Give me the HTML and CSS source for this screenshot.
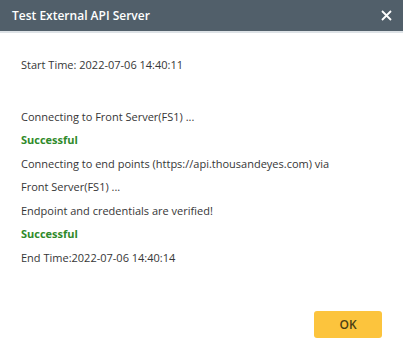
FILE: index.html
```html
<!DOCTYPE html>
<html lang="en">
<head>
  <meta charset="UTF-8" />
  <title>Test External API Server</title>
  <link rel="stylesheet" href="styles.css">
</head>
<body>
  <div class="dialog">
    <div class="dialog-header">
      <span class="dialog-title">Test External API Server</span>
      <span class="close-btn">
        <svg width="11" height="11" viewBox="0 0 11 11"><path d="M1 1L10 10M10 1L1 10" stroke="#fff" stroke-width="1.8"/></svg>
      </span>
    </div>
    <div class="dialog-body">
      <p class="start">Start Time: 2022-07-06 14:40:11</p>
      <p>Connecting to Front Server(FS1) ...</p>
      <p class="ok-text">Successful</p>
      <p>Connecting to end points (https://api.thousandeyes.com) via</p>
      <p>Front Server(FS1) ...</p>
      <p>Endpoint and credentials are verified!</p>
      <p class="ok-text">Successful</p>
      <p>End Time:2022-07-06 14:40:14</p>
    </div>
    <div class="dialog-footer">
      <button class="ok-btn">OK</button>
    </div>
  </div>
</body>
</html>
```

FILE: styles.css
```css
body { margin: 0; background: #fff; font-family: "Open Sans", Arial, sans-serif; }
.dialog { width: 403px; height: 361px; display: flex; flex-direction: column; background: #fff; }
.dialog-header { height: 31px; background: #515f6a; border-bottom: 2px solid #dde2e6; display: flex; align-items: center; justify-content: space-between; padding: 0 11px 0 12px; }
.dialog-title { color: #fff; font-size: 12px; font-weight: 600; }
.close-btn { display: flex; }
.dialog-body { padding: 20px 21px 0; flex: 1; }
.dialog-body p { margin: 0; font-size: 11px; line-height: 23.5px; color: #363636; }
.dialog-body p.start { margin-bottom: 28px; }
.dialog-body p.ok-text { color: #2f8a2a; font-weight: bold; }
.dialog-footer { display: flex; justify-content: flex-end; padding: 0 21px 23px; }
.ok-btn { width: 68px; height: 27px; background: #fcc43d; border: none; border-radius: 3px; color: #4d3f14; font-family: "Open Sans", Arial, sans-serif; font-size: 12px; font-weight: 600; }
```
